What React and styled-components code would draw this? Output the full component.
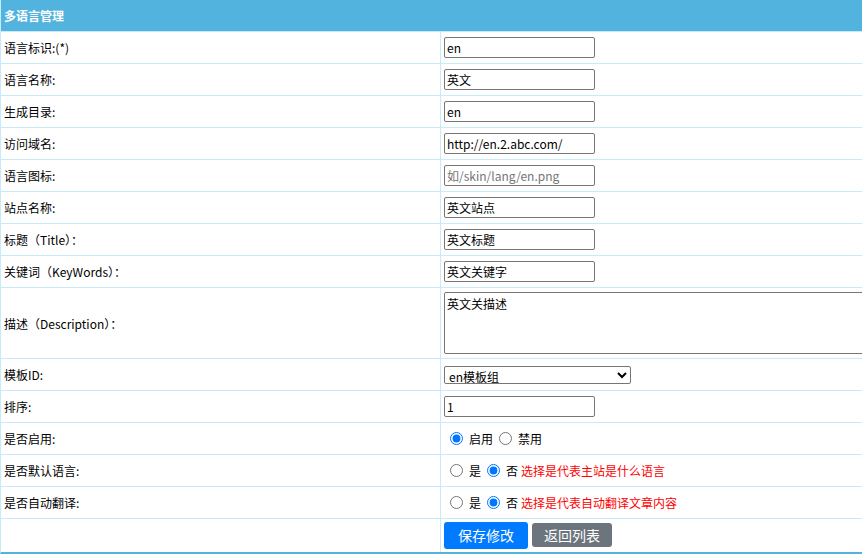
import React from 'react';
import styled, { createGlobalStyle } from 'styled-components';

const GlobalStyle = createGlobalStyle`
  html, body {
    margin: 0;
    padding: 0;
    overflow: hidden;
    background: #fff;
  }
  body {
    font-family: "Microsoft YaHei", "Noto Sans CJK SC", sans-serif;
    font-size: 12px;
    color: #000;
  }
`;

const Panel = styled.div`
  border-left: 1px solid #c6ecfb;
  border-bottom: 2px solid #52b4de;
`;

const Header = styled.div`
  height: 31px;
  display: flex;
  align-items: center;
  padding-left: 3px;
  background: #52b4de;
  color: #fff;
  font-weight: bold;
  font-size: 12px;
  border-bottom: 1px solid #c6ecfb;
`;

const Row = styled.div`
  display: grid;
  grid-template-columns: 440px 1fr;
  min-height: ${p => p.$h || 31}px;
  border-bottom: ${p => (p.$last ? 'none' : '1px solid #c6ecfb')};
`;

const Label = styled.div`
  display: flex;
  align-items: center;
  padding-left: 3px;
  border-right: 1px solid #c6ecfb;
`;

const Field = styled.div`
  display: flex;
  align-items: center;
  padding-left: 3px;
  overflow: hidden;
`;

const Input = styled.input`
  box-sizing: border-box;
  width: 151px;
  height: 21px;
  padding: 1px 2px;
  border: 1px solid #767676;
  border-radius: 2px;
  font: inherit;
  font-size: 12px;
  color: #000;
  &::placeholder {
    color: #757575;
  }
`;

const TextArea = styled.textarea`
  box-sizing: border-box;
  flex: none;
  width: 430px;
  height: 62px;
  padding: 2px;
  border: 1px solid #767676;
  border-radius: 2px;
  font: inherit;
  font-size: 12px;
  resize: none;
`;

const Select = styled.select`
  box-sizing: border-box;
  width: 187px;
  height: 18px;
  border: 1px solid #767676;
  border-radius: 2px;
  font: inherit;
  font-size: 12px;
  background: #fff;
`;

const Radio = styled.input.attrs({ type: 'radio' })`
  margin: 0 6px 0 6px;
  width: 13px;
  height: 13px;
  accent-color: #0075ff;
`;

const Hint = styled.span`
  color: #ff0000;
  margin-left: 3px;
`;

const Button = styled.button`
  box-sizing: border-box;
  border: none;
  border-radius: 3px;
  color: #fff;
  font: inherit;
  font-size: 14px;
  height: ${p => (p.$primary ? 27 : 24)}px;
  padding: 0 ${p => (p.$primary ? 14 : 12)}px;
  background: ${p => (p.$primary ? '#007bff' : '#6c757d')};
  margin-right: 4px;
`;

const Buttons = styled.div`
  display: flex;
  align-items: center;
  padding: 2px 0 3px 3px;
`;

const rows = [
  ['语言标识:(*)', 'en'],
  ['语言名称:', '英文'],
  ['生成目录:', 'en'],
  ['访问域名:', 'http://en.2.abc.com/'],
  ['语言图标:', '', '如/skin/lang/en.png'],
  ['站点名称:', '英文站点'],
  ['标题（Title）：', '英文标题'],
  ['关键词（KeyWords）：', '英文关键字'],
];

const YesNo = ({ name, hint }) => (
  <Field>
    <Radio name={name} />是
    <Radio name={name} defaultChecked />否
    <Hint>{hint}</Hint>
  </Field>
);

const App = () => {
  return (
    <>
      <GlobalStyle />
      <Panel>
        <Header>多语言管理</Header>
        {rows.map(([label, value, ph]) => (
          <Row key={label}>
            <Label>{label}</Label>
            <Field>
              <Input defaultValue={value} placeholder={ph} />
            </Field>
          </Row>
        ))}
        <Row $h={70}>
          <Label>描述（Description）：</Label>
          <Field>
            <TextArea defaultValue="英文关描述" />
          </Field>
        </Row>
        <Row>
          <Label>模板ID:</Label>
          <Field>
            <Select defaultValue="en">
              <option value="en">en模板组</option>
            </Select>
          </Field>
        </Row>
        <Row>
          <Label>排序:</Label>
          <Field>
            <Input defaultValue="1" />
          </Field>
        </Row>
        <Row>
          <Label>是否启用:</Label>
          <Field>
            <Radio name="enable" defaultChecked />启用
            <Radio name="enable" />禁用
          </Field>
        </Row>
        <Row>
          <Label>是否默认语言:</Label>
          <YesNo name="def" hint="选择是代表主站是什么语言" />
        </Row>
        <Row>
          <Label>是否自动翻译:</Label>
          <YesNo name="trans" hint="选择是代表自动翻译文章内容" />
        </Row>
        <Row $h={33} $last>
          <Label />
          <Buttons>
            <Button $primary>保存修改</Button>
            <Button>返回列表</Button>
          </Buttons>
        </Row>
      </Panel>
    </>
  );
};

export default App;
